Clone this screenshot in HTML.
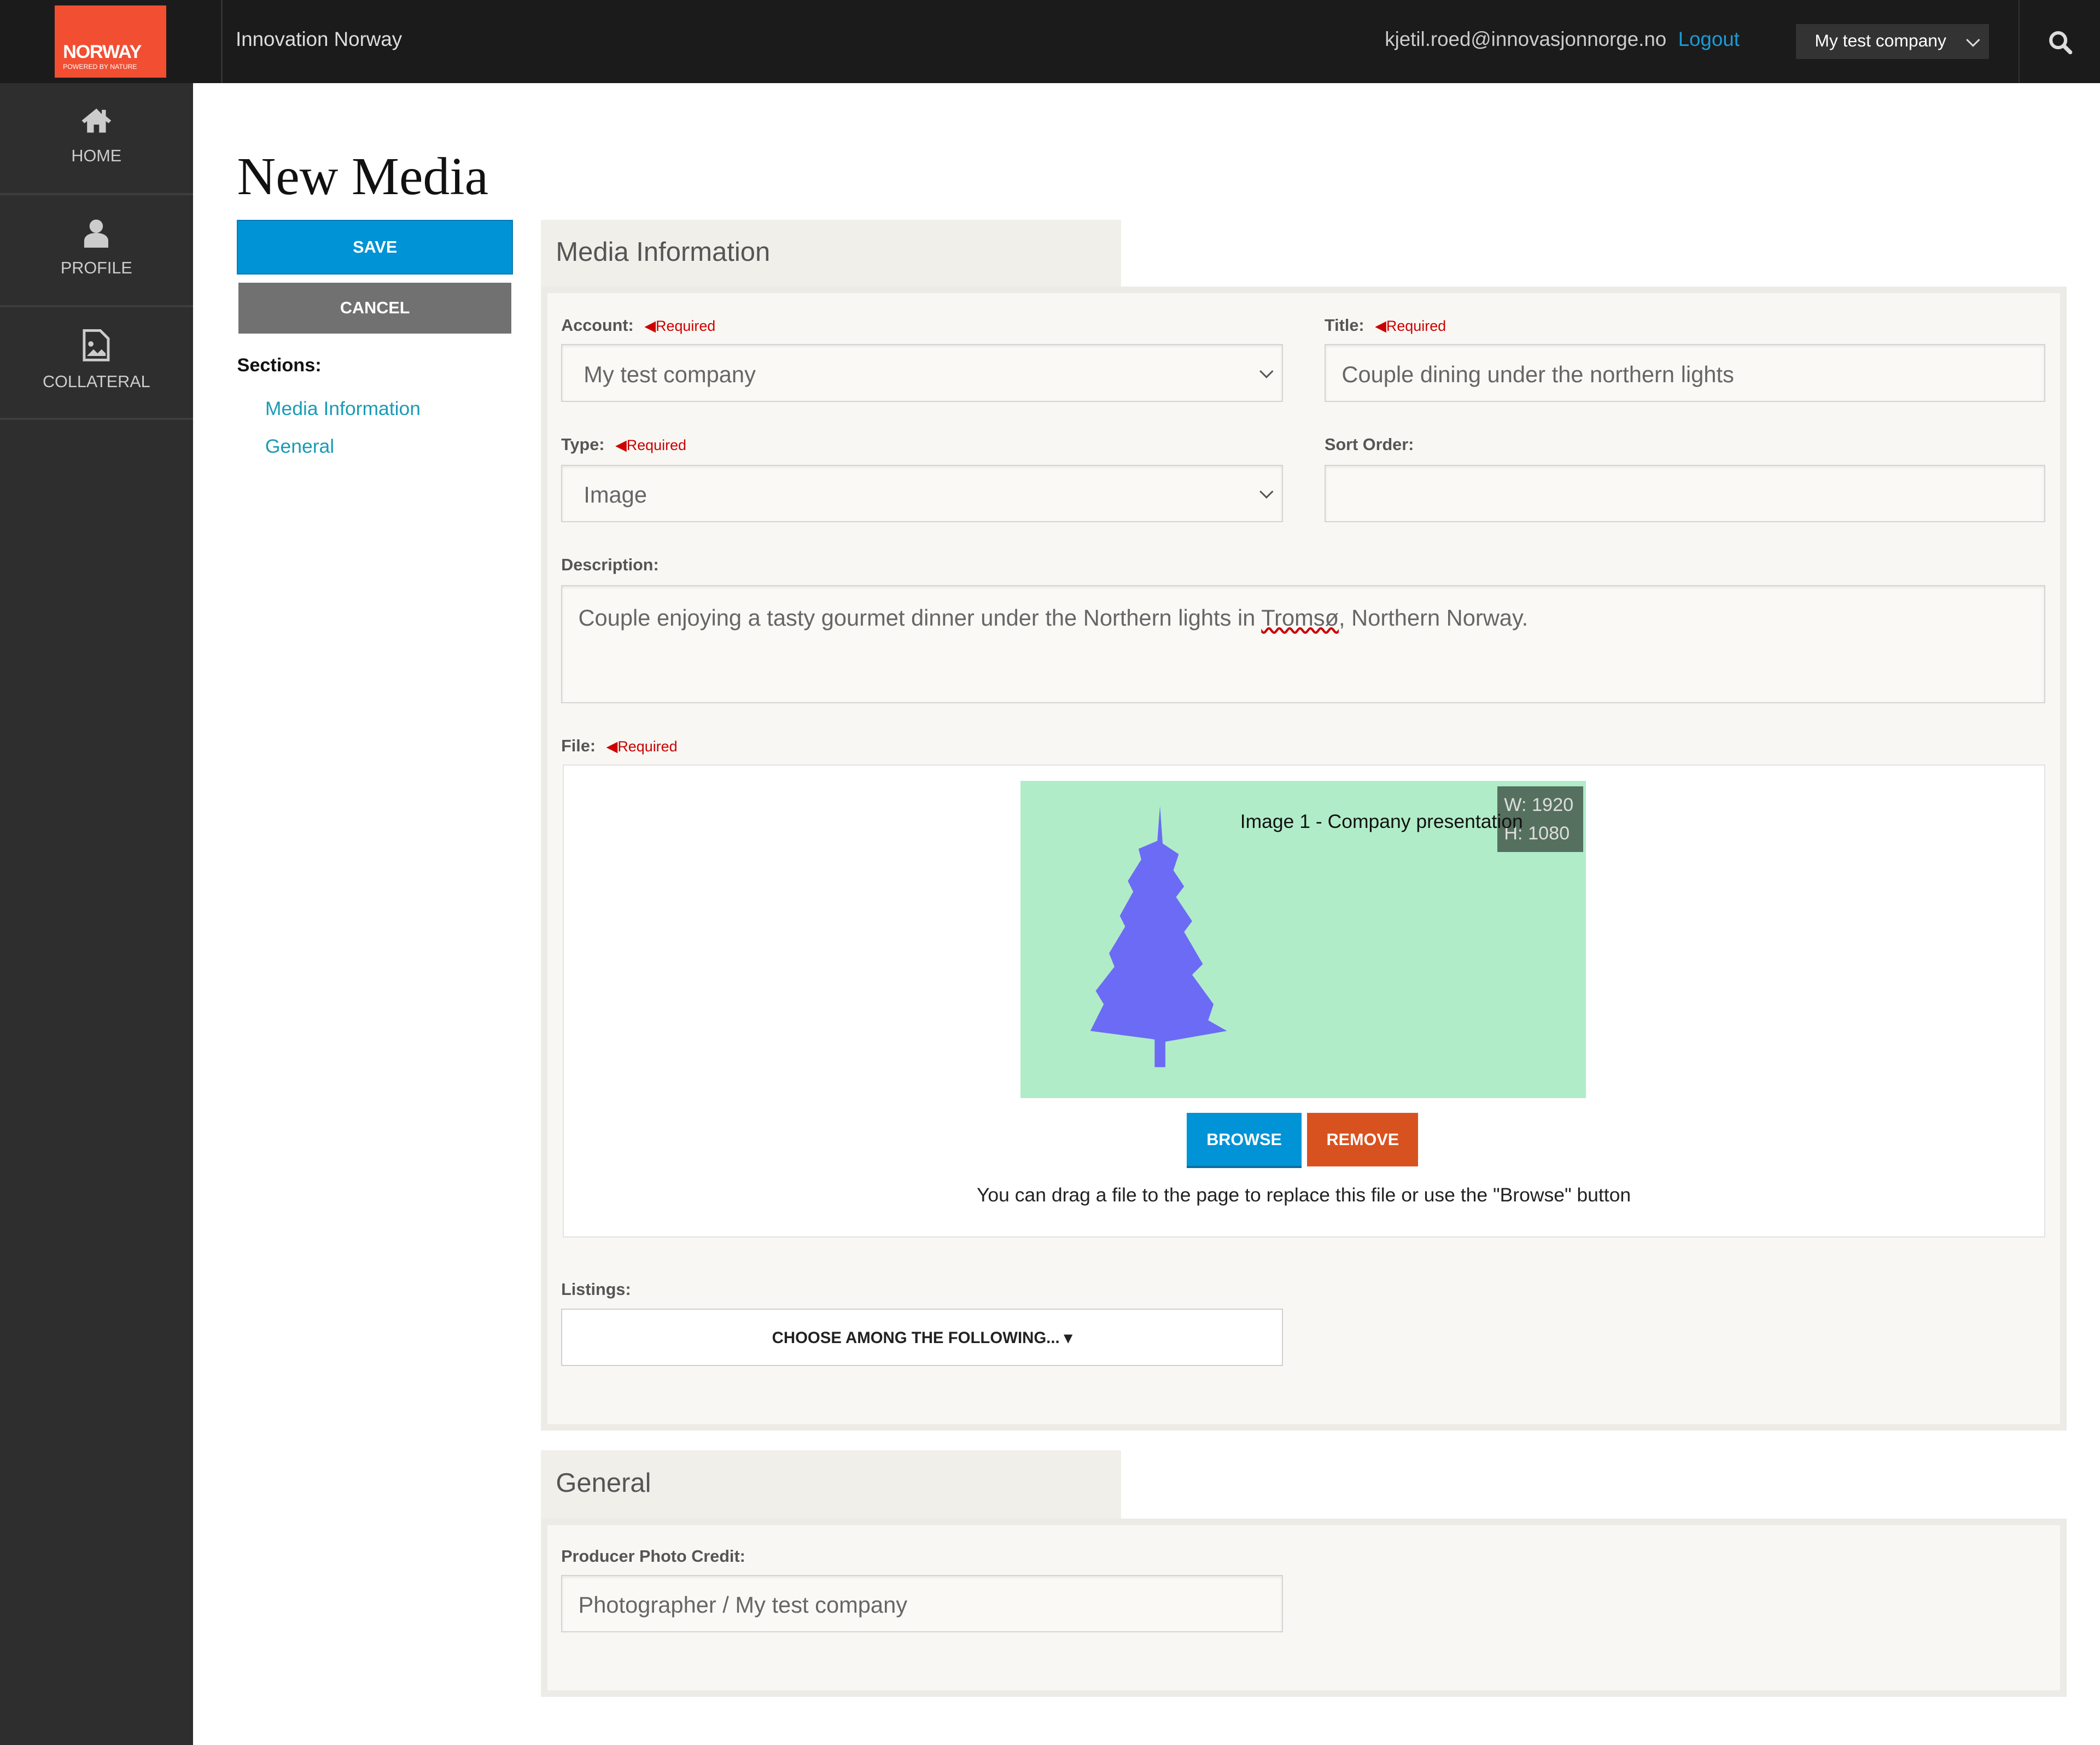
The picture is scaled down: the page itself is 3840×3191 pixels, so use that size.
<!DOCTYPE html>
<html><head><meta charset="utf-8"><style>
html,body{margin:0;padding:0;}
body{width:3840px;height:3191px;overflow:hidden;background:#fff;font-family:"Liberation Sans",sans-serif;}
#r{zoom:2.44898;position:relative;width:1568px;height:1303px;}
.a{position:absolute;}
.top{left:0;top:0;width:1568px;height:62px;background:#1b1b1b;}
.side{left:0;top:62px;width:144px;height:1241px;background:#2e2e2e;}
.nav{left:0;width:144px;height:82px;border-bottom:2px solid #3d3d3d;color:#ccc;font-size:12.5px;text-align:center;}
.lbl{font-size:12.5px;font-weight:bold;color:#555;}
.req{font-size:11px;color:#c00;font-weight:normal;margin-left:8px;}
.inp{background:#faf9f6;border:1px solid #d4d4d4;box-shadow:inset 0 1px 2px rgba(0,0,0,.08);font-size:17px;color:#666;box-sizing:border-box;}
.tab{background:#f0efea;font-size:20px;color:#555;box-sizing:border-box;padding:13px 11px;}
.panel{background:#f8f7f3;border:5px solid #ecebe6;box-sizing:border-box;}
.btn{color:#fff;font-weight:bold;font-size:12.5px;text-align:center;box-sizing:border-box;}
.chev{position:absolute;right:8px;top:50%;margin-top:-5px;width:6px;height:6px;border-right:1.5px solid #555;border-bottom:1.5px solid #555;transform:rotate(45deg);}
</style></head><body><div id="r">
<div class="a top"></div>
<div class="a" style="left:41px;top:4px;width:83px;height:54px;background:#f24e32;"></div>
<div class="a" style="left:47px;top:31px;color:#fff;font-weight:bold;font-size:14px;letter-spacing:-0.5px;">NORWAY</div>
<div class="a" style="left:47px;top:47px;color:#fff;font-size:5px;">POWERED BY NATURE</div>
<div class="a" style="left:165px;top:0;width:1px;height:62px;background:#333;"></div>
<div class="a" style="left:176px;top:21px;color:#ddd;font-size:15px;">Innovation Norway</div>
<div class="a" style="left:1034px;top:21px;color:#ccc;font-size:15px;">kjetil.roed@innovasjonnorge.no</div>
<div class="a" style="left:1253px;top:21px;color:#1a9bd6;font-size:15px;">Logout</div>
<div class="a" style="left:1341px;top:18px;width:144px;height:26px;background:#333;"><span style="position:absolute;left:14px;top:5px;color:#fff;font-size:13px;">My test company</span><div class="chev" style="border-color:#ddd;"></div></div>
<div class="a" style="left:1507px;top:0;width:1px;height:62px;background:#333;"></div>
<svg class="a" style="left:1529px;top:22px" width="20" height="20" viewBox="0 0 20 20"><circle cx="8" cy="8" r="5.5" fill="none" stroke="#ddd" stroke-width="2.5"/><path d="M12 12l5 5" stroke="#ddd" stroke-width="3" stroke-linecap="round"/></svg>
<div class="a side"></div>
<div class="a nav" style="top:62px;"><svg style="margin-top:18px" width="24" height="20" viewBox="0 0 24 20"><path d="M12 1L1 10l2 2 2-1.6V19h5v-6h4v6h5v-8.6l2 1.6 2-2-4-3.3V2h-3v3.2z" fill="#ccc"/></svg><div style="margin-top:6px">HOME</div></div>
<div class="a nav" style="top:146px;"><svg style="margin-top:17px" width="22" height="22" viewBox="0 0 22 22"><circle cx="11" cy="6" r="5" fill="#ccc"/><path d="M2 22v-5c0-4 4-6 9-6s9 2 9 6v5z" fill="#ccc"/></svg><div style="margin-top:5px">PROFILE</div></div>
<div class="a nav" style="top:230px;"><svg style="margin-top:16px" width="22" height="24" viewBox="0 0 22 24"><path d="M2 1h12l6 6v16H2z" fill="none" stroke="#ccc" stroke-width="2"/><circle cx="7" cy="11" r="2" fill="#ccc"/><path d="M4 20l5-5 3 3 3-3 3 3v2z" fill="#ccc"/></svg><div style="margin-top:5px">COLLATERAL</div></div>
<div class="a" style="left:177px;top:109px;font-family:'Liberation Serif',serif;font-size:40px;color:#111;">New Media</div>
<div class="a btn" style="left:177px;top:164px;width:206px;height:41px;background:#0093d6;padding-top:13px;border:1px solid #0a7ab0;">SAVE</div>
<div class="a btn" style="left:178px;top:211px;width:204px;height:38px;background:#717171;padding-top:12px;">CANCEL</div>
<div class="a" style="left:177px;top:265px;font-size:14px;font-weight:bold;color:#111;">Sections:</div>
<div class="a" style="left:198px;top:297px;font-size:14.5px;color:#1a9bb5;">Media Information</div>
<div class="a" style="left:198px;top:325px;font-size:14.5px;color:#1a9bb5;">General</div>

<div class="a tab" style="left:404px;top:164px;width:433px;height:52px;">Media Information</div>
<div class="a panel" style="left:404px;top:214px;width:1139px;height:854px;"></div>
<div class="a lbl" style="left:419px;top:236px;">Account:<span class="req">◀Required</span></div>
<div class="a inp" style="left:419px;top:257px;width:539px;height:43px;padding:12px 16px;">My test company<div class="chev"></div></div>
<div class="a lbl" style="left:989px;top:236px;">Title:<span class="req">◀Required</span></div>
<div class="a inp" style="left:989px;top:257px;width:538px;height:43px;padding:12px 12px;">Couple dining under the northern lights</div>
<div class="a lbl" style="left:419px;top:325px;">Type:<span class="req">◀Required</span></div>
<div class="a inp" style="left:419px;top:347px;width:539px;height:43px;padding:12px 16px;">Image<div class="chev"></div></div>
<div class="a lbl" style="left:989px;top:325px;">Sort Order:</div>
<div class="a inp" style="left:989px;top:347px;width:538px;height:43px;"></div>
<div class="a lbl" style="left:419px;top:415px;">Description:</div>
<div class="a inp" style="left:419px;top:437px;width:1108px;height:88px;padding:14px 12px;">Couple enjoying a tasty gourmet dinner under the Northern lights in <span style="text-decoration:underline wavy #c00;">Tromsø</span>, Northern Norway.</div>
<div class="a lbl" style="left:419px;top:550px;">File:<span class="req">◀Required</span></div>
<div class="a" style="left:420px;top:571px;width:1107px;height:353px;background:#fff;border:1px solid #e2e2e2;box-sizing:border-box;"></div>
<div class="a" style="left:762px;top:583px;width:422px;height:237px;background:#b0ecc8;"></div>
<svg class="a" style="left:810px;top:600px" width="110" height="200" viewBox="0 0 110 200"><g fill="#6b6bf5"><rect x="52" y="165" width="8" height="32"/><path d="M56 2L58 30 L70 38 L66 50 L74 62 L68 70 L80 88 L74 96 L88 120 L80 128 L96 150 L92 162 L106 170 L60 178 L50 176 L4 170 L14 150 L8 140 L22 122 L18 112 L30 92 L26 84 L36 66 L32 58 L42 42 L40 34 L54 28z"/></g></svg>
<div class="a" style="left:1118px;top:587px;width:64px;height:49px;background:rgba(80,105,88,.95);color:#ddd;font-size:14px;padding:4px 0 0 5px;box-sizing:border-box;line-height:21px;">W: 1920<br>H: 1080</div>
<div class="a" style="left:926px;top:605px;font-size:14.5px;color:#111;white-space:nowrap;z-index:2;">Image 1 - Company presentation</div>
<div class="a btn" style="left:886px;top:831px;width:86px;height:41px;background:#0093d6;padding-top:13px;border-bottom:2px solid #0a6fa0;">BROWSE</div>
<div class="a btn" style="left:976px;top:831px;width:83px;height:40px;background:#d8521f;padding-top:13px;">REMOVE</div>
<div class="a" style="left:420px;top:884px;width:1107px;text-align:center;font-size:14.5px;color:#222;">You can drag a file to the page to replace this file or use the "Browse" button</div>
<div class="a lbl" style="left:419px;top:956px;">Listings:</div>
<div class="a" style="left:419px;top:977px;width:539px;height:43px;background:#fff;border:1px solid #d0d0d0;box-sizing:border-box;text-align:center;padding-top:14px;font-size:12px;font-weight:bold;color:#222;">CHOOSE AMONG THE FOLLOWING... ▾</div>

<div class="a tab" style="left:404px;top:1083px;width:433px;height:54px;">General</div>
<div class="a panel" style="left:404px;top:1134px;width:1139px;height:133px;"></div>
<div class="a lbl" style="left:419px;top:1155px;">Producer Photo Credit:</div>
<div class="a inp" style="left:419px;top:1176px;width:539px;height:43px;padding:12px 12px;">Photographer / My test company</div>
</div></body></html>
